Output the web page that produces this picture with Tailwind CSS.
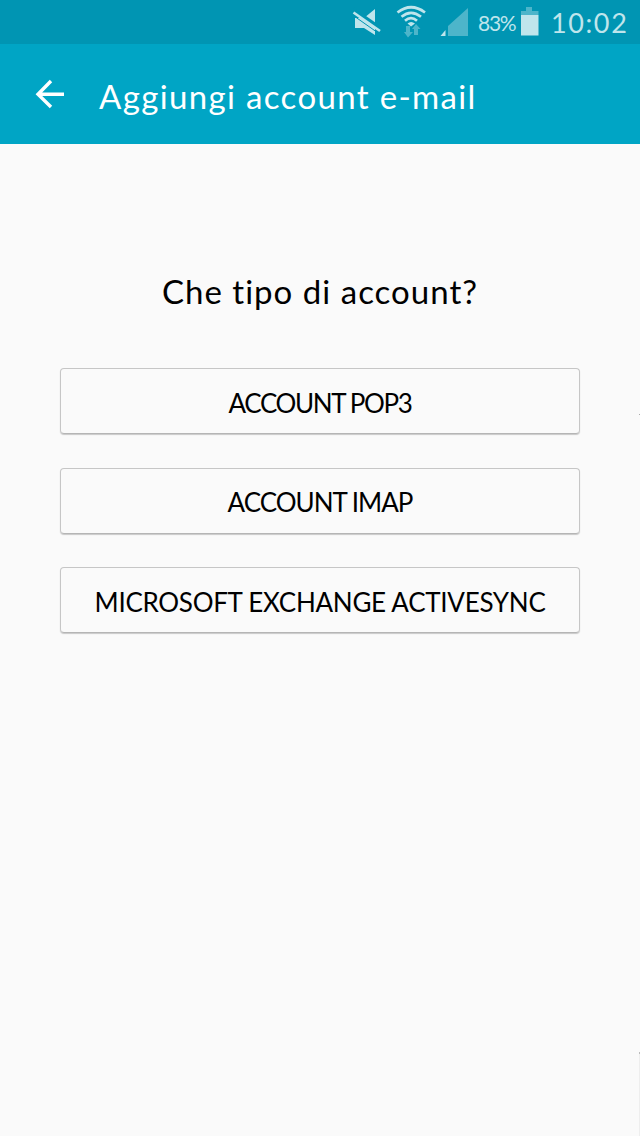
<!DOCTYPE html>
<html lang="it">
<head>
<meta charset="utf-8">
<title>Aggiungi account e-mail</title>
<script src="https://cdn.jsdelivr.net/npm/@tailwindcss/browser@4"></script>
</head>
<body class="relative h-[1136px] w-[640px] overflow-hidden bg-[#fafafa] font-['Lato',sans-serif] text-black">
<div class="flex h-11 items-center bg-[#0095b3] pl-[352px] text-[#bfe5ec]">
  <svg class="h-11 w-[120px] shrink-0" viewBox="352 0 120 44">
    <path d="M355 18h9l11-9v26l-11-7h-9z" fill="currentColor"/>
    <path d="M353 9.500L381 29" stroke="#0095b3" stroke-width="4"/>
    <path d="M353.500 12.500L380 31" stroke="currentColor" stroke-width="2.600"/>
    <path d="M354 16L376 31.500" stroke="#0095b3" stroke-width="1"/>
    <g fill="none" stroke="currentColor" stroke-width="2.700"><path d="M397.500 12.500Q411 2 425 12.500"/><path d="M401.500 16.800Q411 9 421 16.800"/><path d="M405 20.800Q411 15.500 417 20.800"/></g>
    <path d="M407.500 23.500Q411 20.500 415 23.500L411 26.500z" fill="currentColor"/>
    <path d="M406 26h4v6h3l-5 5.500-4-5.500h2zM414 35v-6h-2l4-5 4.500 5H418v6z" fill="#4db5ca"/>
    <path d="M440.500 36l5-6v6z" fill="currentColor"/>
    <path d="M448 36V26L468 8v28z" fill="#4db5ca"/>
  </svg>
  <span class="ml-[6px] w-[37px] shrink-0 whitespace-nowrap pt-[2px] text-[21px] tracking-[-1.300px]">83%</span>
  <svg class="ml-[5px] h-11 w-[20px] shrink-0" viewBox="520 0 20 44"><path d="M521 15v-4h5V7h6v4h6.500v4z" fill="#4db5ca"/><path d="M521 15h17.500v20.500H521z" fill="currentColor"/></svg>
  <span class="ml-[11px] whitespace-nowrap pt-[3px] text-[27px] tracking-[1.600px]">10:02</span>
</div>
<header class="flex h-[100px] items-center bg-[#00a5c5] pl-[35px] text-white">
  <svg class="h-[30px] w-[30px] shrink-0" viewBox="35 79 30 30" fill="none" stroke="currentColor" stroke-width="3.400"><path d="M51 81L38 94.200 51 107M37.500 94.200H64"/></svg>
  <h1 class="ml-[34px] whitespace-nowrap pt-[3px] text-[33px] leading-10 tracking-[1.350px]">Aggiungi account e-mail</h1>
</header>
<main class="flex flex-col items-center pt-[127px]">
  <h2 class="whitespace-nowrap text-[33px] leading-10 tracking-[1.020px]">Che tipo di account?</h2>
  <div class="mt-[57px] flex w-[520px] flex-col gap-[33.5px]">
    <button class="h-[66px] rounded-[4px] border border-[#c6c6c6] border-b-[#b5b5b5] pt-1 text-[26px] whitespace-nowrap shadow-[0_1px_1px_#c8c8c8]"><span class="tracking-[-1.350px]">ACCOUNT POP3</span></button>
    <button class="h-[66px] rounded-[4px] border border-[#c6c6c6] border-b-[#b5b5b5] pt-1 text-[26px] whitespace-nowrap shadow-[0_1px_1px_#c8c8c8]"><span class="tracking-[-1px]">ACCOUNT IMAP</span></button>
    <button class="h-[66px] rounded-[4px] border border-[#c6c6c6] border-b-[#b5b5b5] pt-1 text-[26px] whitespace-nowrap shadow-[0_1px_1px_#c8c8c8]"><span class="tracking-[-0.280px]">MICROSOFT EXCHANGE ACTIVESYNC</span></button>
  </div>
</main>
<div class="absolute left-[639px] top-[414px] h-px w-px bg-[#aaa]"></div>
<div class="absolute left-[639px] top-[1052px] h-[84px] w-px border-t-2 border-[#bbb] bg-[#eee]"></div>
</body>
</html>
